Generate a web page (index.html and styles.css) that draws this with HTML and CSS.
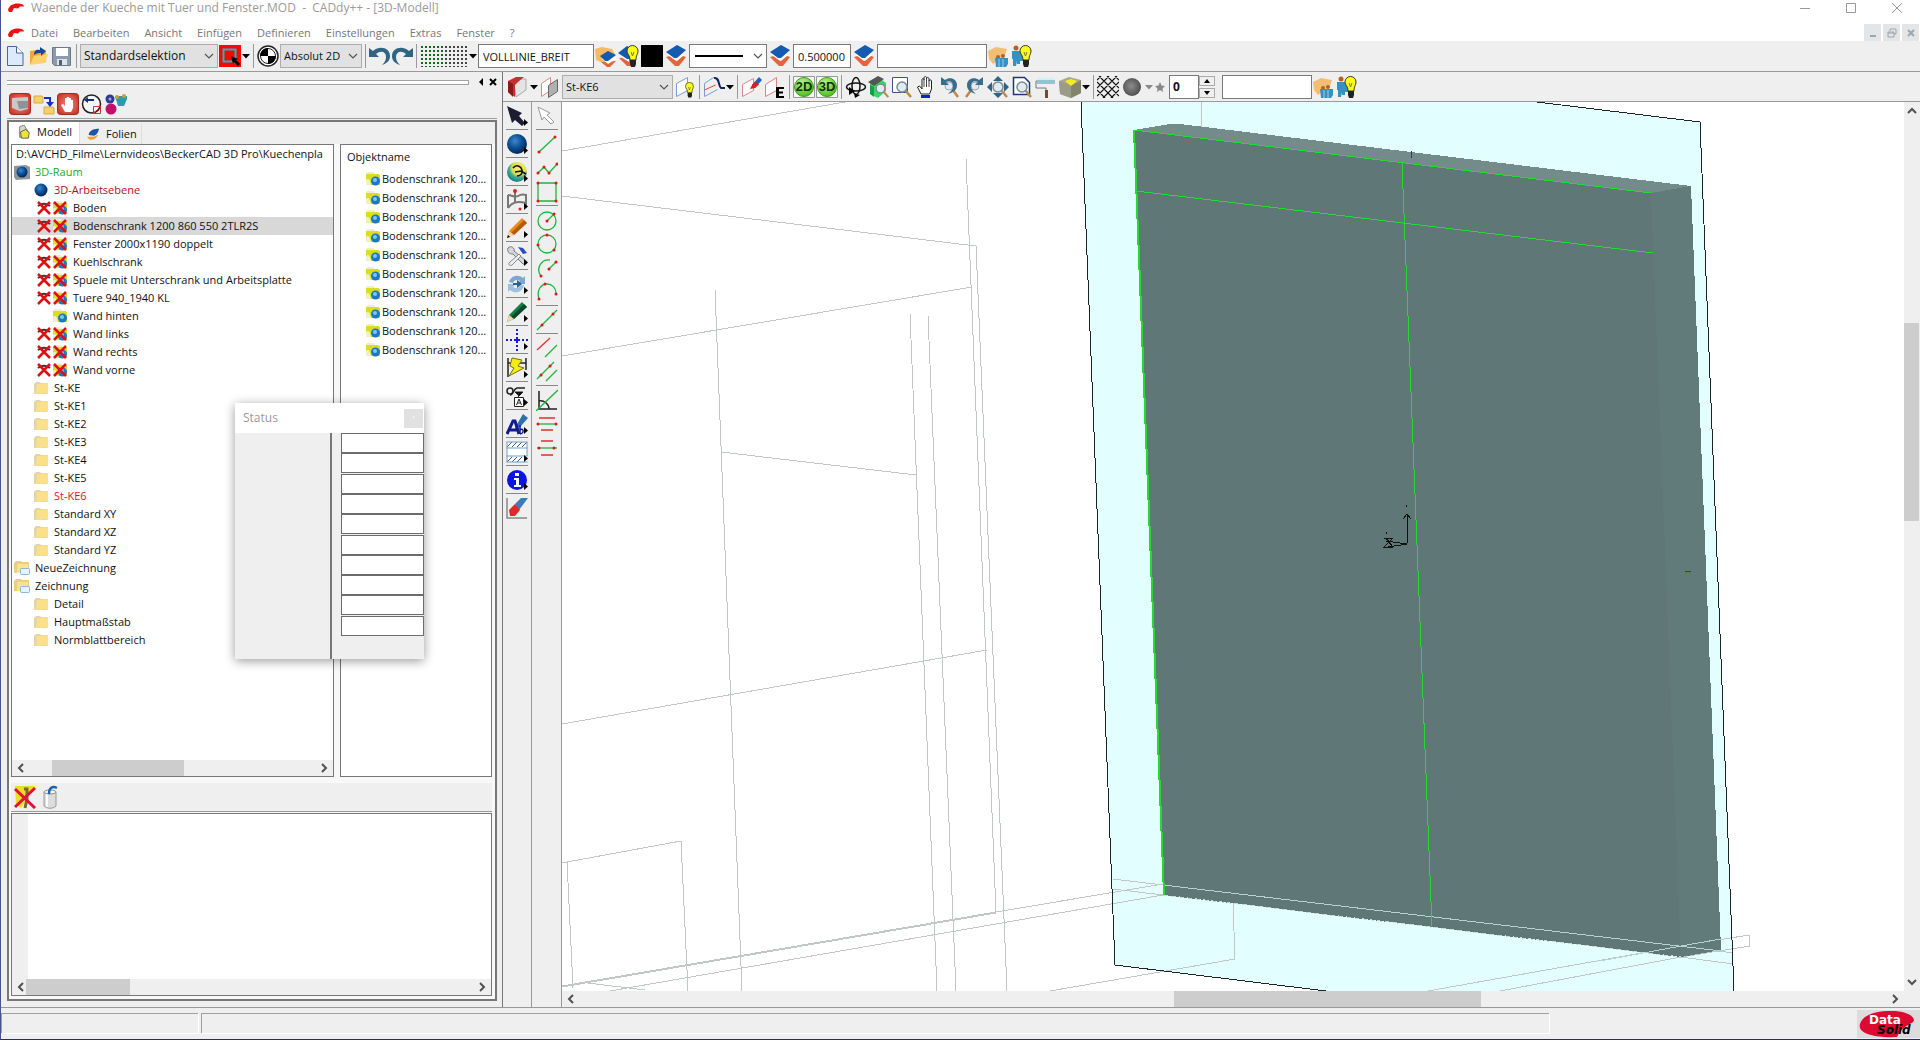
FILE: index.html
```html
<!DOCTYPE html>
<html lang="de">
<head>
<meta charset="utf-8">
<title>Waende der Kueche mit Tuer und Fenster.MOD - CADdy++ - [3D-Modell]</title>
<link rel="stylesheet" href="styles.css">
</head>
<body>
<svg class="defs" aria-hidden="true">
  <defs>
    <radialGradient id="g-ball" cx=".4" cy=".35" r=".7"><stop offset="0" stop-color="#3f8ac8"/><stop offset=".5" stop-color="#0c4f97"/><stop offset="1" stop-color="#04204a"/></radialGradient>
    <radialGradient id="g-lime" cx=".4" cy=".3" r=".7"><stop offset="0" stop-color="#b8f58a"/><stop offset="1" stop-color="#4fbf22"/></radialGradient>
    <radialGradient id="g-grey" cx=".45" cy=".45" r=".6"><stop offset="0" stop-color="#8c8c8c"/><stop offset="1" stop-color="#4a4a4a"/></radialGradient>
    <radialGradient id="g-marble" cx=".6" cy=".3" r=".8"><stop offset="0" stop-color="#fff36a"/><stop offset=".45" stop-color="#d8dc50"/><stop offset=".6" stop-color="#3fae98"/><stop offset="1" stop-color="#0b6a70"/></radialGradient>
    <radialGradient id="g-red" cx=".5" cy=".5" r=".7"><stop offset="0" stop-color="#f4897c"/><stop offset="1" stop-color="#c0281c"/></radialGradient>
  </defs>
  <symbol id="logo" viewBox="0 0 16 10"><path d="M0 7C1 2 6 0 11 0.5c3 .3 5 1.500 5 3L12 3.500 10 5.500 6 5 4 9 1 9z" fill="#f01010"/></symbol>
  <symbol id="new" viewBox="0 0 22 22"><path d="M2.500 1.500h9l6.500 6.500v12.500H2.500z" fill="#dcebfb" stroke="#4a6698"/><path d="M11.500 1.500V8H18" fill="#fff" stroke="#4a6698"/></symbol>
  <symbol id="open" viewBox="0 0 22 22"><path d="M2 19V6l7-1 2 2 7-1v11z" fill="#efa738"/><path d="M2 20l4-9 14-2-3 9z" fill="#fdd26c"/><path d="M6 10c0-5 3-6 6-5V2l6 4-5 5V8c-2 0-4 0-7 2z" fill="#15489a"/></symbol>
  <symbol id="save" viewBox="0 0 22 22"><path d="M1.500 2.500h18v18H3.500l-2-2z" fill="#8a9cae" stroke="#6c7a88"/><path d="M5 3h12v8H5z" fill="#fff"/><path d="M6 14h10v6H6z" fill="#dfe4e8"/><path d="M8 15h3v5H8z" fill="#54626f"/></symbol>
  <symbol id="sel" viewBox="0 0 22 22"><path d="M0 0h22v22H0z" fill="#fb0505"/><path d="M4.500 4.500h12v12h-12z" fill="none" stroke="#23b7b7" stroke-width="2"/><path d="M12 11l7 3-2 1 4 4-2 2-4-4-1 2z"/></symbol>
  <symbol id="cog" viewBox="0 0 22 22"><circle cx="11" cy="11" r="10" fill="#fff" stroke="#222" stroke-width="1.500"/><circle cx="11" cy="11" r="7.500" fill="#fff" stroke="#222"/><path d="M11 11V3a8 8 0 0 0-8 8zM11 11v8a8 8 0 0 0 8-8z"/></symbol>
  <symbol id="undo" viewBox="0 0 22 22"><path d="M0 3v9h10L7 9c5-4 10-2 10 3 0 3-1 5-4 8 6-2 8-5 8-9C21 3 11 0 4 6z" fill="#2f6485"/></symbol>
  <symbol id="dots" viewBox="0 0 48 22"><path d="M1 2h23M1 6h23M1 10h23M1 14h23M1 18h23M1 22h23" stroke="#146a14" stroke-width="2" stroke-dasharray="2 2"/><path d="M25 2h22M25 6h22M25 10h22M25 14h22M25 18h22M25 22h22" stroke="#444" stroke-width="2" stroke-dasharray="2 2"/></symbol>
  <symbol id="layers" viewBox="0 0 22 22"><path d="M1 12l9 9h4l7-9-3-1-6 5-7-5z" fill="#e8623c"/><path d="M3 10l8 6 8-6-1-2H4z" fill="#fff"/><path d="M1 7l11-7 9 5-9 8H9z" fill="#135ab0"/></symbol>
  <symbol id="flayers" viewBox="0 0 22 22"><path d="M0 4l7-2 10 2 3 5-12 9-7-3z" fill="#f6ba60"/><path d="M6 17l6 5h3l6-6z" fill="#e8623c"/><path d="M7 14l6 5 8-5v-2H7z" fill="#fff"/><path d="M5 11l8-5 8 4-8 6h-3z" fill="#135ab0"/></symbol>
  <symbol id="bulbpart" viewBox="0 0 22 22"><path d="M9 6a5.500 5.500 0 1 1 11 0c0 3-2 4-2 9h-6c0-5-3-6-3-9z" fill="#fbfb1c" stroke="#3c3c10"/><path d="M12 15h6v4l-1 3h-4l-1-3z" fill="#222"/><path d="M13 7l1.500 4L16 7" fill="none" stroke="#775"/></symbol>
  <symbol id="lbulb" viewBox="0 0 22 22"><path d="M1 13l8 8h4v-9z" fill="#e8623c"/><path d="M3 12l8 5v-6z" fill="#fff"/><path d="M0 8l9-7 4 2v11H9z" fill="#135ab0"/><use href="#bulbpart" width="22" height="22"/></symbol>
  <symbol id="pbulb" viewBox="0 0 22 22"><circle cx="5" cy="3" r="2.500" fill="#b5621a"/><path d="M1 6h11v10H9v3H6v-3l-1 5H2v-7H1z" fill="#3590c4"/><use href="#bulbpart" width="22" height="22"/></symbol>
  <symbol id="fpeople" viewBox="0 0 22 22"><path d="M0 6l8-4 11 2-2 6-12 9-4-5z" fill="#f4bd75"/><circle cx="10" cy="12" r="2" fill="#b5621a"/><circle cx="15" cy="11" r="2" fill="#b5621a"/><path d="M7 13h13v6l-2 3H8z" fill="#3590c4"/><path d="M11 14v8M15 14v8" stroke="#9bd0ea"/></symbol>
  <symbol id="wall" viewBox="0 0 22 22"><path d="M7 7l4-4h8v11l-10 7z" fill="#e4e4e4" stroke="#aaa"/><path d="M1 5l8-4h8l-6 5-3 3v12l-7-5z" fill="#c43030"/><path d="M1 5l5 3v13l-5-5z" fill="#8a1a1a"/></symbol>
  <symbol id="planes" viewBox="0 0 22 22"><path d="M2.500 7.500l9-6v13l-9 6z" fill="#fff" stroke="#d88"/><path d="M9.500 9.500l9-6v12l-9 6z" fill="#b0b0b0" stroke="#666"/></symbol>
  <symbol id="planebulb" viewBox="0 0 22 22"><path d="M2.500 7.500l11-6v13l-11 6z" fill="#fff" stroke="#7d9bd0"/><g transform="translate(5 6) scale(.72)"><use href="#bulbpart" width="22" height="22"/></g></symbol>
  <symbol id="curve" viewBox="0 0 22 22"><path d="M1.500 7.500l9-6M1.500 20.500l13-7M1.500 7.500v13" fill="none" stroke="#7d9bd0"/><path d="M1.500 14l11-5" stroke="#e04040"/><path d="M11 2c6-1 4 8 7 10h4" fill="none" stroke="#10235c" stroke-width="2"/></symbol>
  <symbol id="planepen" viewBox="0 0 22 22"><path d="M1.500 8.500l11-6v12l-11 6z" fill="#fff" stroke="#d88"/><path d="M11 9l7-8 3 3-7 8z" fill="#1d62c0"/><path d="M11 9l3-3.500 4 3-4 3.500-5 1z" fill="#d82020"/></symbol>
  <symbol id="planee" viewBox="0 0 22 22"><path d="M1.500 8.500l11-7v13l-11 6z" fill="#fff" stroke="#e48080"/><path d="M12 11h8v2h-5v2.500h4v2h-4V20h5v2h-8z"/></symbol>
  <symbol id="disc" viewBox="0 0 22 22"><path d="M.5.5h21v21H.5z" fill="#f8f8f8" stroke="#999"/><circle cx="11" cy="11" r="9.500" fill="url(#g-lime)" stroke="#3d9a1e"/></symbol>
  <symbol id="rotate" viewBox="0 0 22 22"><ellipse cx="11" cy="10" rx="4" ry="8.500" fill="none" stroke="#111" stroke-width="1.500"/><ellipse cx="11" cy="11" rx="9.500" ry="4" fill="none" stroke="#111" stroke-width="1.500"/><path d="M4 11l6 4-6 4zM9 17l6 2-5 3z"/></symbol>
  <symbol id="mag" viewBox="0 0 22 22"><path d="M14 14l6 7" stroke="#b98a4a" stroke-width="2.500"/><circle cx="11" cy="11" r="5" fill="#dfeaf2" stroke="#7a8a96" stroke-width="1.500"/></symbol>
  <symbol id="house" viewBox="0 0 22 22"><path d="M2 7l8-6 8 6v8l-8 7-8-4z" fill="#35d866"/><path d="M0 6l10-6 6 3-10 7z" fill="#555"/><path d="M2 9l4 2v10l-4-3z" fill="#1f9a44"/><use href="#mag" x="3" y="3" width="19" height="19"/></symbol>
  <symbol id="zoomwin" viewBox="0 0 22 22"><path d="M1.500 1.500h15v15h-15z" fill="#fff" stroke="#44509c"/><use href="#mag" width="22" height="22"/></symbol>
  <symbol id="hand" viewBox="0 0 22 22"><path d="M6 18L2.500 11l2-1 2.500 3V4c0-2 2-2 2 0V2c0-2 2.500-2 2.500 0v1c0-2 2.500-2 2.500 0v2c0-1.500 2.500-1.500 2.500 0v8l-2 5z" fill="#fff" stroke="#222"/><path d="M9 4v7M11.500 3v8M14 5v6" stroke="#444"/><path d="M6 19h9v3H6z" fill="#1020d0"/></symbol>
  <symbol id="zundo" viewBox="0 0 22 22"><path d="M13 13l6 8" stroke="#b98a4a" stroke-width="2.500"/><circle cx="10" cy="10" r="4" fill="#dfeaf2" stroke="#9aa"/><path d="M2 1v8h8L7 6c4-2 7 0 7 4s-2 5-5 8c6-2 9-4 9-9 0-6-7-9-12-5z" fill="#3a6c8c"/></symbol>
  <symbol id="pan" viewBox="0 0 22 22"><path d="M11 0l5 5H6zM11 22l5-5H6zM0 11l5-5v10zM22 11l-5-5v10z" fill="#2f6485"/><use href="#mag" width="22" height="22"/></symbol>
  <symbol id="page" viewBox="0 0 22 22"><path d="M2.500 1.500h11l5 5v12h-16z" fill="#fff" stroke="#23308c" stroke-width="1.500"/><use href="#mag" width="22" height="22"/></symbol>
  <symbol id="roller" viewBox="0 0 22 22"><path d="M2 2h18v6H2z" fill="#8fc6d2"/><path d="M2 2h18v2H2z" fill="#d5eef3"/><path d="M2 5H1v7h10v3" fill="none" stroke="#777"/><path d="M10 14h3v8h-3z" fill="#7a4a2c"/></symbol>
  <symbol id="cube" viewBox="0 0 22 22"><path d="M0 5l10-4 12 3v13l-10 5L1 18z" fill="#a8a890"/><path d="M0 5l12 4v13L1 18z" fill="#9a9c88"/><path d="M6 5l6-2 6 2-6 5z" fill="#f4ee1c"/><path d="M12 10v12l10-5V4z" fill="#84846c"/></symbol>
  <symbol id="hatch" viewBox="0 0 22 22"><path d="M0 4l4-4M0 12L12 0M0 20L20 0M6 22L22 6M14 22l8-8M18 0l4 4M10 0l12 12M2 0l20 20M0 6l16 16M0 14l8 8" stroke="#111" stroke-width="1.200"/></symbol>
  <symbol id="greyball" viewBox="0 0 22 22"><circle cx="11" cy="11" r="9" fill="url(#g-grey)"/></symbol>
  <symbol id="star" viewBox="0 0 12 12"><path d="M6 1l1.500 3.500L11 5 8.500 7.500 9 11 6 9l-3 2 .5-3.500L1 5l3.500-.5z" fill="#888"/></symbol>
  <symbol id="redbtn" viewBox="0 0 22 22"><rect x=".5" y=".5" width="21" height="21" rx="3" fill="url(#g-red)" stroke="#a02a20"/></symbol>
  <symbol id="p1" viewBox="0 0 22 22"><use href="#redbtn" width="22" height="22"/><path d="M3 5l16-1v12l-8 2-8-3z" fill="#c9c9c9"/><path d="M8 8h11v7l-9 1z" fill="#8e9496"/></symbol>
  <symbol id="p2" viewBox="0 0 22 22"><path d="M1 3h8l1 1v6H1zM11 14h9l1 1v6H11z" fill="#f5d070" stroke="#d8aa48"/><path d="M11 5h6v5" fill="none" stroke="#1030c8" stroke-width="2"/><path d="M13 9h8l-4 5z" fill="#1030c8"/></symbol>
  <symbol id="p3" viewBox="0 0 22 22"><use href="#redbtn" width="22" height="22"/><path d="M8 19l-4-7 2-1 2 2V5h2v5V4h2v6-5h2v6-4h2v8l-2 4z" fill="#fff"/></symbol>
  <symbol id="p4" viewBox="0 0 22 22"><circle cx="10.500" cy="11" r="9" fill="#f6f6f6" stroke="#222" stroke-width="1.500"/><path d="M5 7h8" stroke="#10307c" stroke-width="2"/><path d="M3 7l4-3v6z" fill="#10307c"/><path d="M12.500 13.500h7v7h-7zM12.500 20.500l4-4" fill="none" stroke="#d03030"/></symbol>
  <symbol id="p5" viewBox="0 0 22 22"><circle cx="5" cy="6" r="4.500" fill="#2c3c9c"/><circle cx="6" cy="16" r="5.500" fill="#c0106c"/><circle cx="5" cy="6" r="1.500" fill="#aab"/><path d="M10 3h12v3l-3 7h-6z" fill="#2a9cb0"/><circle cx="12" cy="4" r="2" fill="#c8a040"/><circle cx="19" cy="3" r="2" fill="#c8a040"/></symbol>
  <symbol id="t1" viewBox="0 0 16 16"><path d="M3 2l5-2 5 8-2 5-8 1z" fill="#d8d8c0" stroke="#777"/><path d="M4 8l6-3 4 4-1 6H5z" fill="#ece43c" stroke="#554"/></symbol>
  <symbol id="t2" viewBox="0 0 16 16"><path d="M1 11c3 5 8 5 13-2-3 0-4 3-7 2z" fill="#f0a030"/><path d="M3 9c1-6 7-7 12-7-1 3-2 7-6 8z" fill="#1b56a8"/></symbol>
  <symbol id="room" viewBox="0 0 16 16"><path d="M0 2l12-1 4 2v12l-14 1-2-3z" fill="#8f9699"/><circle cx="8" cy="8" r="5.500" fill="url(#g-ball)"/></symbol>
  <symbol id="ball" viewBox="0 0 16 16"><circle cx="8" cy="8" r="6.500" fill="url(#g-ball)"/></symbol>
  <symbol id="part" viewBox="0 0 16 16"><path d="M1 3h12l2 1v10H1z" fill="#dcdc20"/><path d="M2 1h7l1 2H1z" fill="#eeeec8"/><path d="M1 9c2-2 4-1 5 5H1z" fill="#f0f0c0"/><circle cx="10.500" cy="10" r="4.500" fill="#1a78c8"/><circle cx="10" cy="9" r="2" fill="#7cc8f4"/></symbol>
  <symbol id="x1" viewBox="0 0 16 16"><path d="M2 6c3-3 9-3 12 0" fill="none" stroke="#333" stroke-width="2"/><path d="M2 2l12 12M14 2L2 14" stroke="#e01010" stroke-width="2.500"/></symbol>
  <symbol id="x2" viewBox="0 0 16 16"><use href="#part" width="16" height="16"/><path d="M2 2l12 12M14 2L2 14" stroke="#e01010" stroke-width="2.500"/></symbol>
  <symbol id="folder" viewBox="0 0 16 16"><path d="M1 4l2-2h4l1 1h7v10l-1 1H1z" fill="#e4d5a4"/><path d="M4 4l11-1v10l-12 1z" fill="#fbe08a"/></symbol>
  <symbol id="dfolder" viewBox="0 0 16 16"><path d="M0 3l2-2h5l1 1h7v11H0z" fill="#e9cf83"/><path d="M3 4h11v9H3z" fill="#fbe28c"/><rect x="6.500" y="8.500" width="9" height="6" rx="1" fill="#e8f4fc" stroke="#8ab6d8"/></symbol>
  <symbol id="del" viewBox="0 0 24 24"><path d="M2 1h20l-6 10-8 12-5-4z" fill="#e8e020"/><path d="M11 4h3v10l-2 9" fill="none" stroke="#776a30" stroke-width="3"/><path d="M2 4l20 19M22 3L2 22" stroke="#e4103c" stroke-width="3"/></symbol>
  <symbol id="bin" viewBox="0 0 24 24"><path d="M4 7h12v14c-3 3-9 3-12 0z" fill="#dcdcdc" stroke="#999"/><path d="M7 9v13" stroke="#fff" stroke-width="2"/><ellipse cx="10" cy="7" rx="6" ry="2" fill="#f6f6f6" stroke="#888"/><path d="M9 9c0-7 4-8 8-6" fill="none" stroke="#1d62ac" stroke-width="2.500"/></symbol>
  <symbol id="more" viewBox="0 0 22 22"><path d="M18 14l4 3.500-4 3.500z"/></symbol>
  <symbol id="v1" viewBox="0 0 22 22"><path d="M1 1l15 7-3 3 6 7-3 3-7-6-3 3z" fill="#1c1c34"/></symbol>
  <symbol id="v2" viewBox="0 0 22 22"><circle cx="11" cy="11" r="10" fill="url(#g-ball)"/></symbol>
  <symbol id="v3" viewBox="0 0 22 22"><circle cx="11" cy="11" r="10" fill="url(#g-marble)"/><path d="M7 7c3-4 8-2 9 2s-2 6-5 6" fill="none" stroke="#111" stroke-width="1.500"/><path d="M9 11l6-1 5 3" fill="none" stroke="#111" stroke-width="1.500"/></symbol>
  <symbol id="v4" viewBox="0 0 22 22"><path d="M2 6v13M2 6c4 0 7 3 10 1s5-2 8-1v11M2 19c4-6 9-7 18-5M9 3v10" fill="none" stroke="#777" stroke-width="2"/><circle cx="9" cy="2" r="2" fill="#e02020"/><circle cx="14" cy="20" r="1.500" fill="#e02020"/></symbol>
  <symbol id="v5" viewBox="0 0 22 22"><path d="M1 21l2-7L16 1l5 5L8 18z" fill="#ee8a1c"/><path d="M5 16L18 3l3 3L8 18z" fill="#b85a0c"/><path d="M1 21l2-7 5 4z" fill="#f3d8a8"/><path d="M1 21l1-3 2 2z"/></symbol>
  <symbol id="v6" viewBox="0 0 22 22"><path d="M2 3c3-3 7 0 6 3l11 9c3 1 1 5-2 4L7 9C3 9 1 7 2 3z" fill="#d4d8de" stroke="#777"/><path d="M12 2l5 1 4 5-4 1z" fill="#2d4cc0"/><path d="M3 18l10-9 2 2-9 9c-2 1-4 0-3-2z" fill="#eee" stroke="#888"/></symbol>
  <symbol id="v7" viewBox="0 0 22 22"><path d="M3 9c2-7 10-8 14-4l2-2v8h-8l3-3c-3-2-6-1-7 2z" fill="#7ca6d4"/><path d="M18 12c-2 8-9 9-14 5l-2 2v-8h8l-3 3c3 2 6 1 8-2z" fill="#9dbfe0"/><path d="M7 10h4V7l5 4-5 4v-3H7z" fill="#2c5e98"/></symbol>
  <symbol id="v8" viewBox="0 0 22 22"><path d="M1 21l2-7L16 1l5 5L8 18z" fill="#178048"/><path d="M5 16L18 3l3 3L8 18z" fill="#0c4c2a"/><path d="M1 21l2-7 5 4z" fill="#f3d8a8"/></symbol>
  <symbol id="v9" viewBox="0 0 22 22"><path d="M11 0v22M0 11h22" stroke="#1818e0" stroke-width="2" stroke-dasharray="2 2"/><path d="M8 11h6M11 8v6" stroke="#1818e0" stroke-width="2"/></symbol>
  <symbol id="v10" viewBox="0 0 22 22"><path d="M2 1v19M20 1v12M2 6h18" stroke="#222" stroke-width="1.500"/><path d="M6 1l10 2-4 6 6 2L3 19l5-8-4-2z" fill="#f4ec14" stroke="#77700c"/></symbol>
  <symbol id="v11" viewBox="0 0 22 22"><circle cx="4" cy="6" r="3" fill="none" stroke="#222" stroke-width="1.500"/><path d="M4 10c4 0 3-6 7-7h8" fill="none" stroke="#222" stroke-width="1.500"/><path d="M9 7h8l-4 4zM12.500 8v4" stroke="#222"/><path d="M8.500 12.500h9v9h-9z" fill="#fff" stroke="#222"/><path d="M10.500 20l2.500-6 2.500 6M11.500 18h3" fill="none" stroke="#222"/></symbol>
  <symbol id="v12" viewBox="0 0 22 22"><path d="M10 13l7-12 5 4-8 9-5 2z" fill="#2f6fae"/><path d="M1 21L7 8h2l4 13M4 17h7" fill="none" stroke="#101c8c" stroke-width="3"/><path d="M14 12v9M14 17c3-3 5 3 0 4" fill="none" stroke="#101c8c" stroke-width="1.500"/></symbol>
  <symbol id="v13" viewBox="0 0 22 22"><path d="M1 1h20v20H1z" fill="#fff"/><path d="M1 6l5-5M6 6l5-5M11 6l5-5M16 6l5-5M1 21l5-5M6 21l5-5M11 21l5-5" stroke="#3c5c84"/><path d="M.5 1h21M.5 7h21M.5 15h21M.5 21h21M1 1v20M21 1v14" stroke="#6f9fcc"/></symbol>
  <symbol id="v14" viewBox="0 0 22 22"><circle cx="11" cy="11" r="10" fill="#0c14e0"/><path d="M9 4h4v3H9zM8 9h5v7h2v2H8v-2h2v-5H8z" fill="#fff"/></symbol>
  <symbol id="v15" viewBox="0 0 22 22"><path d="M1 1v20h20" fill="none" stroke="#888" stroke-width="1.500"/><path d="M9 7l6-6h7l-9 12z" fill="#3a7cb8"/><path d="M3 13l6-6 5 6-5 6H4z" fill="#e02828"/></symbol>
  <symbol id="w1" viewBox="0 0 22 22"><path d="M2 2l12 6-3 2 7 7-3 2-7-7-2 3z" fill="#fff" stroke="#999"/></symbol>
  <symbol id="w2" viewBox="0 0 22 22"><path class="ln" d="M3 19L19 4"/><path class="pt" d="M3 19h0M19 4h0"/></symbol>
  <symbol id="w3" viewBox="0 0 22 22"><path class="ln" d="M2 16l6-6 5 6 8-9"/><path class="pt" d="M2 16h0M8 10h0M13 16h0M21 7h0"/></symbol>
  <symbol id="w4" viewBox="0 0 22 22"><path class="ln" d="M2 2h18v18H2z"/><path class="pt" d="M2 2h0M20 2h0M20 20h0M2 20h0"/></symbol>
  <symbol id="w5" viewBox="0 0 22 22"><circle class="ln" cx="11" cy="12" r="9"/><path class="ln" d="M11 12l7-7"/><path class="pt" d="M11 12h0M18 5h0"/></symbol>
  <symbol id="w6" viewBox="0 0 22 22"><circle class="ln" cx="11" cy="11" r="9"/><path class="pt" d="M11 2h0M2 12h0M18 17h0"/></symbol>
  <symbol id="w7" viewBox="0 0 22 22"><path class="ln" d="M5 19C-1 11 6 2 14 3M13 12l7-7"/><path class="pt" d="M5 19h0M13 12h0M20 5h0"/></symbol>
  <symbol id="w8" viewBox="0 0 22 22"><path class="ln" d="M3 18C0 8 6 3 11 3s9 4 9 9"/><path class="pt" d="M3 18h0M9 3h0M20 13h0"/></symbol>
  <symbol id="w9" viewBox="0 0 22 22"><path class="ln" d="M1 21L21 1"/><path class="pt" d="M6 16h0M17 5h0"/></symbol>
  <symbol id="w10" viewBox="0 0 22 22"><path class="rd" d="M1 13L14 1"/><path class="ln" d="M9 20L21 8"/></symbol>
  <symbol id="w11" viewBox="0 0 22 22"><path class="ln" d="M1 18L18 1M10 20L21 9"/><path class="pt" d="M5 14h0M14 5h0"/></symbol>
  <symbol id="w12" viewBox="0 0 22 22"><path d="M3 2v18h18M3 12c5-1 10 3 10 8" fill="none" stroke="#222" stroke-width="1.500"/><path class="ln" d="M0 22L22 1"/></symbol>
  <symbol id="w13" viewBox="0 0 22 22"><path class="rd" d="M3 5h16M5 17h12"/><path class="ln" d="M1 11h20"/><path class="pt" d="M2 11h0M20 11h0"/></symbol>
  <symbol id="w14" viewBox="0 0 22 22"><path class="rd" d="M5 4h12M5 18h12"/><path class="ln" d="M1 11h20"/><path class="pt" d="M3 11h0M18 11h0"/></symbol>
  <symbol id="down" viewBox="0 0 8 22"><path d="M0 9h8l-4 4.500z"/></symbol>
  <symbol id="chev" viewBox="0 0 10 10"><path d="M1 3l4 4 4-4" fill="none" stroke="#555" stroke-width="1.200"/></symbol>
  <symbol id="sb" viewBox="0 0 10 10"><path d="M7 1L3 5l4 4" fill="none" stroke="#505050" stroke-width="2"/></symbol>
</svg>

<header class="title">
  <svg class="logo"><use href="#logo"/></svg>
  <h1>Waende der Kueche mit Tuer und Fenster.MOD&nbsp; -&nbsp; CADdy++ - [3D-Modell]</h1>
  <div class="winbtns">
    <button aria-label="Minimieren"><svg viewBox="0 0 12 12"><path d="M1 6.500h10"/></svg></button>
    <button aria-label="Maximieren"><svg viewBox="0 0 12 12"><path d="M1.500 1.500h9v9h-9z"/></svg></button>
    <button aria-label="Schließen"><svg viewBox="0 0 12 12"><path d="M1 1l10 10M11 1L1 11"/></svg></button>
  </div>
</header>
<nav class="menu">
  <svg class="logo"><use href="#logo"/></svg>
  <button>Datei</button><button>Bearbeiten</button><button>Ansicht</button><button>Einfügen</button><button>Definieren</button><button>Einstellungen</button><button>Extras</button><button>Fenster</button><button>?</button>
  <div class="mdi">
    <button aria-label="Fenster minimieren"><svg viewBox="0 0 12 12"><path d="M3 9h6"/></svg></button>
    <button aria-label="Fenster wiederherstellen"><svg viewBox="0 0 12 12"><path class="thin" d="M4 4V2h6v5H8M2 5h6v5H2zM2 6h6"/></svg></button>
    <button aria-label="Fenster schließen"><svg viewBox="0 0 12 12"><path d="M3 3l6 6M9 3L3 9"/></svg></button>
  </div>
</nav>

<div class="bar">
  <button class="ib" aria-label="Neu"><svg><use href="#new"/></svg></button>
  <button class="ib" aria-label="Öffnen"><svg><use href="#open"/></svg></button>
  <button class="ib" aria-label="Speichern"><svg><use href="#save"/></svg></button>
  <i class="sep"></i>
  <span class="sel w138"><select aria-label="Selektion"><option>Standardselektion</option></select><svg><use href="#chev"/></svg></span>
  <button class="ib" aria-label="Selektieren"><svg><use href="#sel"/></svg></button>
  <button class="dd" aria-label="Mehr"><svg><use href="#down"/></svg></button>
  <i class="sep"></i>
  <button class="ib" aria-label="Koordinaten"><svg><use href="#cog"/></svg></button>
  <span class="sel w82"><select aria-label="Koordinatenmodus"><option>Absolut 2D</option></select><svg><use href="#chev"/></svg></span>
  <i class="sep"></i>
  <span class="pair"><button class="ib" aria-label="Rückgängig"><svg><use href="#undo"/></svg></button><button class="ib flip" aria-label="Wiederholen"><svg><use href="#undo"/></svg></button></span>
  <i class="sep"></i>
  <button class="ib grid" aria-label="Raster"><svg><use href="#dots"/></svg></button>
  <button class="dd" aria-label="Rasteroptionen"><svg><use href="#down"/></svg></button>
  <input class="field w116" aria-label="Linientyp" value="VOLLLINIE_BREIT">
  <button class="ib" aria-label="Folien öffnen"><svg><use href="#flayers"/></svg></button>
  <button class="ib" aria-label="Folien sichtbar"><svg><use href="#lbulb"/></svg></button>
  <button class="ib black" aria-label="Farbe"></button>
  <button class="ib wide" aria-label="Farbe nach Folie"><svg><use href="#layers"/></svg></button>
  <span class="sel white w78"><select aria-label="Linienart"><option label=" "></option></select><svg class="stroke" viewBox="0 0 48 4"><path d="M0 2h48" stroke="#000" stroke-width="2"/></svg><svg><use href="#chev"/></svg></span>
  <button class="ib wide" aria-label="Linienart nach Folie"><svg><use href="#layers"/></svg></button>
  <input class="field w58" aria-label="Linienbreite" value="0.500000">
  <button class="ib wide" aria-label="Breite nach Folie"><svg><use href="#layers"/></svg></button>
  <input class="field w110" aria-label="Gruppe">
  <button class="ib" aria-label="Gruppen öffnen"><svg><use href="#fpeople"/></svg></button>
  <button class="ib" aria-label="Gruppen sichtbar"><svg><use href="#pbulb"/></svg></button>
</div>

<div class="work">
  <aside class="dock">
    <div class="grip"><i></i><button aria-label="Andocken"><svg viewBox="0 0 8 8"><path d="M6 0v8L2 4z"/></svg></button><button aria-label="Schließen"><svg viewBox="0 0 8 8"><path d="M1 1l6 6M7 1L1 7" stroke="#000" stroke-width="2"/></svg></button></div>
    <div class="dockbar">
      <button class="ib" aria-label="Ansicht"><svg><use href="#p1"/></svg></button>
      <button class="ib" aria-label="Struktur"><svg><use href="#p2"/></svg></button>
      <button class="ib" aria-label="Greifen"><svg><use href="#p3"/></svg></button>
      <button class="ib" aria-label="Messen"><svg><use href="#p4"/></svg></button>
      <button class="ib" aria-label="Gruppen"><svg><use href="#p5"/></svg></button>
    </div>
    <section class="book">
      <div class="tabs"><button class="on"><svg><use href="#t1"/></svg>Modell</button><button><svg><use href="#t2"/></svg>Folien</button></div>
      <div class="panes">
        <div class="pane tree">
          <ul>
            <li class="path">D:\AVCHD_Filme\Lernvideos\BeckerCAD 3D Pro\Kuechenpla</li>
            <li class="l1 green"><svg><use href="#room"/></svg>3D-Raum</li>
            <li class="l2 dark"><svg><use href="#ball"/></svg>3D-Arbeitsebene</li>
            <li class="l3"><svg><use href="#x1"/></svg><svg><use href="#x2"/></svg>Boden</li>
            <li class="l3 cur"><svg><use href="#x1"/></svg><svg><use href="#x2"/></svg>Bodenschrank 1200 860 550 2TLR2S</li>
            <li class="l3"><svg><use href="#x1"/></svg><svg><use href="#x2"/></svg>Fenster 2000x1190 doppelt</li>
            <li class="l3"><svg><use href="#x1"/></svg><svg><use href="#x2"/></svg>Kuehlschrank</li>
            <li class="l3"><svg><use href="#x1"/></svg><svg><use href="#x2"/></svg>Spuele mit Unterschrank und Arbeitsplatte</li>
            <li class="l3"><svg><use href="#x1"/></svg><svg><use href="#x2"/></svg>Tuere 940_1940 KL</li>
            <li class="l3"><svg></svg><svg><use href="#part"/></svg>Wand hinten</li>
            <li class="l3"><svg><use href="#x1"/></svg><svg><use href="#x2"/></svg>Wand links</li>
            <li class="l3"><svg><use href="#x1"/></svg><svg><use href="#x2"/></svg>Wand rechts</li>
            <li class="l3"><svg><use href="#x1"/></svg><svg><use href="#x2"/></svg>Wand vorne</li>
            <li class="l2"><svg><use href="#folder"/></svg>St-KE</li>
            <li class="l2"><svg><use href="#folder"/></svg>St-KE1</li>
            <li class="l2"><svg><use href="#folder"/></svg>St-KE2</li>
            <li class="l2"><svg><use href="#folder"/></svg>St-KE3</li>
            <li class="l2"><svg><use href="#folder"/></svg>St-KE4</li>
            <li class="l2"><svg><use href="#folder"/></svg>St-KE5</li>
            <li class="l2 red"><svg><use href="#folder"/></svg>St-KE6</li>
            <li class="l2"><svg><use href="#folder"/></svg>Standard XY</li>
            <li class="l2"><svg><use href="#folder"/></svg>Standard XZ</li>
            <li class="l2"><svg><use href="#folder"/></svg>Standard YZ</li>
            <li class="l1"><svg><use href="#dfolder"/></svg>NeueZeichnung</li>
            <li class="l1"><svg><use href="#dfolder"/></svg>Zeichnung</li>
            <li class="l2"><svg><use href="#folder"/></svg>Detail</li>
            <li class="l2"><svg><use href="#folder"/></svg>Hauptmaßstab</li>
            <li class="l2"><svg><use href="#folder"/></svg>Normblattbereich</li>
          </ul>
          <div class="sbar"><svg><use href="#sb"/></svg><div class="track"><i class="thumb t-tree"></i></div><svg class="r"><use href="#sb"/></svg></div>
        </div>
        <div class="pane objs">
          <h2>Objektname</h2>
          <ul>
            <li><svg><use href="#part"/></svg>Bodenschrank 120...</li>
            <li><svg><use href="#part"/></svg>Bodenschrank 120...</li>
            <li><svg><use href="#part"/></svg>Bodenschrank 120...</li>
            <li><svg><use href="#part"/></svg>Bodenschrank 120...</li>
            <li><svg><use href="#part"/></svg>Bodenschrank 120...</li>
            <li><svg><use href="#part"/></svg>Bodenschrank 120...</li>
            <li><svg><use href="#part"/></svg>Bodenschrank 120...</li>
            <li><svg><use href="#part"/></svg>Bodenschrank 120...</li>
            <li><svg><use href="#part"/></svg>Bodenschrank 120...</li>
            <li><svg><use href="#part"/></svg>Bodenschrank 120...</li>
          </ul>
        </div>
      </div>
      <div class="delbar"><button aria-label="Löschen"><svg><use href="#del"/></svg></button><button aria-label="Papierkorb"><svg><use href="#bin"/></svg></button></div>
      <div class="pane log"><div class="gutter"></div>
        <div class="sbar"><svg><use href="#sb"/></svg><div class="track"><i class="thumb t-log"></i></div><svg class="r"><use href="#sb"/></svg></div>
      </div>
    </section>
  </aside>

  <main class="main">
    <div class="bar bar2">
      <button class="ib" aria-label="Wand"><svg><use href="#wall"/></svg></button>
      <button class="dd" aria-label="Wandoptionen"><svg><use href="#down"/></svg></button>
      <button class="ib" aria-label="Ebenen"><svg><use href="#planes"/></svg></button>
      <span class="sel w111"><select aria-label="Arbeitsebene"><option>St-KE6</option></select><svg><use href="#chev"/></svg></span>
      <button class="ib" aria-label="Ebene sichtbar"><svg><use href="#planebulb"/></svg></button>
      <i class="sep"></i>
      <button class="ib" aria-label="Kurve"><svg><use href="#curve"/></svg></button>
      <button class="dd" aria-label="Kurvenoptionen"><svg><use href="#down"/></svg></button>
      <i class="sep"></i>
      <button class="ib" aria-label="Ebene bearbeiten"><svg><use href="#planepen"/></svg></button>
      <button class="ib" aria-label="Ebene E"><svg><use href="#planee"/></svg></button>
      <i class="sep"></i>
      <button class="ib disc"><svg><use href="#disc"/></svg><b>2D</b></button>
      <button class="ib disc"><svg><use href="#disc"/></svg><b>3D</b></button>
      <i class="sep"></i>
      <button class="ib" aria-label="Drehen"><svg><use href="#rotate"/></svg></button>
      <button class="ib" aria-label="Modellansicht"><svg><use href="#house"/></svg></button>
      <button class="ib" aria-label="Zoom Fenster"><svg><use href="#zoomwin"/></svg></button>
      <button class="ib mid" aria-label="Verschieben"><svg><use href="#hand"/></svg></button>
      <button class="ib mid" aria-label="Zoom zurück"><svg><use href="#zundo"/></svg></button>
      <button class="ib mid flip" aria-label="Zoom vor"><svg><use href="#zundo"/></svg></button>
      <button class="ib mid" aria-label="Alles zeigen"><svg><use href="#pan"/></svg></button>
      <button class="ib mid" aria-label="Seite zeigen"><svg><use href="#page"/></svg></button>
      <button class="ib mid" aria-label="Neu zeichnen"><svg><use href="#roller"/></svg></button>
      <button class="ib mid" aria-label="Darstellung"><svg><use href="#cube"/></svg></button>
      <button class="dd" aria-label="Darstellungsoptionen"><svg><use href="#down"/></svg></button>
      <i class="sep"></i>
      <button class="ib" aria-label="Schraffur"><svg><use href="#hatch"/></svg></button>
      <button class="ib wide" aria-label="Material"><svg><use href="#greyball"/></svg></button>
      <button class="dd off" aria-label="Materialoptionen"><svg><use href="#down"/></svg></button>
      <svg class="star"><use href="#star"/></svg>
      <span class="spin"><input class="field" aria-label="Nummer" value="0"><span><button aria-label="Mehr"><svg viewBox="0 0 6 4"><path d="M0 4l3-4 3 4z"/></svg></button><button aria-label="Weniger"><svg viewBox="0 0 6 4"><path d="M0 0l3 4 3-4z"/></svg></button></span></span>
      <input class="field w90" aria-label="Filter">
      <button class="ib" aria-label="Gruppen"><svg><use href="#fpeople"/></svg></button>
      <button class="ib" aria-label="Gruppen zeigen"><svg><use href="#pbulb"/></svg></button>
    </div>
    <div class="stage">
      <div class="tools one">
        <button class="ib" aria-label="Auswahl"><svg><use href="#v1"/><use href="#more"/></svg></button><hr>
        <button class="ib" aria-label="Kugel"><svg><use href="#v2"/><use href="#more"/></svg></button><hr>
        <button class="ib" aria-label="Boolesch"><svg><use href="#v3"/><use href="#more"/></svg></button><hr>
        <button class="ib" aria-label="Fläche"><svg><use href="#v4"/><use href="#more"/></svg></button><hr>
        <button class="ib" aria-label="Zeichnen"><svg><use href="#v5"/><use href="#more"/></svg></button><hr>
        <button class="ib" aria-label="Werkzeuge"><svg><use href="#v6"/><use href="#more"/></svg></button><hr>
        <button class="ib" aria-label="Transformieren"><svg><use href="#v7"/><use href="#more"/></svg></button><hr>
        <button class="ib" aria-label="Stift"><svg><use href="#v8"/><use href="#more"/></svg></button><hr>
        <button class="ib" aria-label="Punkt"><svg><use href="#v9"/><use href="#more"/></svg></button><hr>
        <button class="ib" aria-label="Bemaßung"><svg><use href="#v10"/><use href="#more"/></svg></button><hr>
        <button class="ib" aria-label="Symbole"><svg><use href="#v11"/><use href="#more"/></svg></button><hr>
        <button class="ib" aria-label="Text"><svg><use href="#v12"/><use href="#more"/></svg></button><hr>
        <button class="ib" aria-label="Schraffieren"><svg><use href="#v13"/><use href="#more"/></svg></button><hr>
        <button class="ib" aria-label="Info"><svg><use href="#v14"/><use href="#more"/></svg></button><hr>
        <button class="ib" aria-label="Radieren"><svg><use href="#v15"/></svg></button>
      </div>
      <div class="tools two">
        <button class="ib" aria-label="Zeiger"><svg><use href="#w1"/></svg></button><hr>
        <button class="ib" aria-label="Linie"><svg><use href="#w2"/></svg></button>
        <button class="ib" aria-label="Polylinie"><svg><use href="#w3"/></svg></button>
        <button class="ib" aria-label="Rechteck"><svg><use href="#w4"/></svg></button><hr>
        <button class="ib" aria-label="Kreis"><svg><use href="#w5"/></svg></button>
        <button class="ib" aria-label="Kreis über drei Punkte"><svg><use href="#w6"/></svg></button>
        <button class="ib" aria-label="Bogen"><svg><use href="#w7"/></svg></button>
        <button class="ib" aria-label="Bogen über drei Punkte"><svg><use href="#w8"/></svg></button><hr>
        <button class="ib" aria-label="Hilfslinie"><svg><use href="#w9"/></svg></button><hr>
        <button class="ib" aria-label="Parallele"><svg><use href="#w10"/></svg></button>
        <button class="ib" aria-label="Parallele durch Punkte"><svg><use href="#w11"/></svg></button><hr>
        <button class="ib" aria-label="Winkel"><svg><use href="#w12"/></svg></button>
        <button class="ib" aria-label="Mittellinie"><svg><use href="#w13"/></svg></button>
        <button class="ib" aria-label="Mittellinie kurz"><svg><use href="#w14"/></svg></button>
      </div>
      <div class="view">
        <svg class="scene" viewBox="562 102 1342 889" preserveAspectRatio="xMidYMid slice" role="img" aria-label="3D-Modell">
          <path d="M1081 102L1115 965 1326 991H1734L1700 122 1537 102z" fill="#e2fefe"/>
          <g class="wire">
            <path d="M562 151L845 102M562 196L976 246M562 356L972 287M966 159L996 913M976 246L1007 991M910 314L937 991M928 316L956 991M715 290L742 991M721 452L916 475M562 724L987 650M562 862H567L681 841 688 991M567 861L573 988M562 987L996 913M588 983L645 990"/>
            <path d="M562 986L996 912L1163 884M610 991L1163 895M1113 889L1163 895M1113 879L1163 885M1201 102L1202 130M1233 903L1235 959 1050 991M1428 991L1681 946 1749 935 1750 946 1681 957 1500 991M1681 957L1733 964M1681 946L1733 953"/>
          </g>
          <path d="M1134 130L1651 192 1681 957 1163 895z" fill="#5f7777"/>
          <path d="M1134 130L1170 124H1180L1691 186 1651 193z" fill="#738b8b"/>
          <path d="M1651 193L1691 186 1721 950 1681 957z" fill="#617a7a"/>
          <path d="M1163 885L1721 951M1600 961L1681 946 1721 939" fill="none" stroke="#b6d2d2"/>
          <path d="M1163 895L1681 957" fill="none" stroke="#c8dcdc" stroke-dasharray="5 3"/>
          <path d="M1134 130L1651 193M1136 191L1653 253M1402 163L1432 927" fill="none" stroke="#22dd30"/>
          <path d="M1134 130L1164 895" fill="none" stroke="#22dd30" stroke-width="2"/>
          <path d="M1081 102L1115 965 1326 991M1537 102L1700 122 1734 991" fill="none" stroke="#1c2424"/>
          <path d="M1407 543V514M1403 519L1407 514 1411 519M1407 544L1386 541M1407 544L1388 547M1384 538H1393L1384 547H1393M1386 538L1392 546M1406 505V507M1386 532V534" fill="none" stroke="#111"/>
          <path d="M1411 151V158M1685 571H1691" stroke="#243c8c"/>
        </svg>
        <div class="vbar"><svg><use href="#sb"/></svg><div class="track"><i class="thumb"></i></div><svg class="d"><use href="#sb"/></svg></div>
        <div class="sbar"><svg><use href="#sb"/></svg><div class="track"><i class="thumb t-view"></i></div><svg class="r"><use href="#sb"/></svg></div>
        <div class="corner"></div>
      </div>
    </div>
  </main>
</div>

<footer class="status"><div class="cell a"></div><div class="cell b"></div>
  <svg class="brand" viewBox="0 0 63 28" role="img" aria-label="Data Solid"><path d="M0 0h63v28H0z" fill="#dcdcdc"/><path d="M3 14C6 4 20 1 34 1c14 0 23 4 23 10-5 5-12 5-17 16-20 1-40-3-37-13z" fill="#dc0a32"/><text x="12" y="14" class="data">Data</text><text x="20" y="24" class="solid">Solid</text></svg>
</footer>

<section class="float">
  <header><h2>Status</h2><button aria-label="Status schließen">·</button></header>
  <div class="body"><div class="left"></div>
    <div class="fields">
      <div><input aria-label="Wert 1"><input aria-label="Wert 2"></div>
      <div><input aria-label="Wert 3"><input aria-label="Wert 4"><input aria-label="Wert 5"></div>
      <div><input aria-label="Wert 6"><input aria-label="Wert 7"><input aria-label="Wert 8"><input aria-label="Wert 9"></div>
      <div><input aria-label="Wert 10"></div>
    </div>
  </div>
</section>
</body>
</html>
```
FILE: styles.css
```css
* { box-sizing: border-box; }
body {
  margin: 0;
  height: 100vh;
  display: flex;
  flex-direction: column;
  background: #efefef;
  border-left: 1px solid #46548c;
  border-bottom: 1px solid #2a3054;
  font: 12px/16px "Open Sans", "Noto Sans", sans-serif;
  color: #111;
  overflow: hidden;
}
.defs { position: absolute; width: 0; height: 0; }
button, input, select { font: inherit; color: inherit; margin: 0; padding: 0; border: 0; background: none; }
h1, h2 { margin: 0; font: inherit; }
ul { margin: 0; padding: 0; list-style: none; }
svg { display: block; flex: none; }

.title { display: flex; flex: none; align-items: center; height: 24px; padding: 0 17px 8px 7px; gap: 7px; background: #fff; color: #9a9a9a; }
.logo { width: 16px; height: 10px; }
.winbtns { display: flex; margin-left: auto; gap: 34px; }
.winbtns svg { width: 12px; height: 12px; fill: none; stroke: #999; }

.menu { display: flex; flex: none; align-items: center; height: 17px; padding: 0 1px 0 7px; background: #fff; color: #777; font-size: 11px; }
.menu > button { padding-right: 15px; }
.menu > .logo { margin-right: 7px; }
.mdi { display: flex; margin-left: auto; gap: 2px; }
.mdi button { width: 17px; height: 17px; background: #e3e5e7; display: grid; place-items: center; }
.mdi svg { width: 12px; height: 12px; fill: none; stroke: #9aa6b2; stroke-width: 2; }
.mdi .thin { stroke-width: 1; }

.bar { display: flex; flex: none; align-items: center; gap: 1px; height: 31px; padding: 0 4px; border-bottom: 1px solid #999; }
.ib { width: 22px; height: 22px; display: grid; place-items: center; flex: none; }
.ib svg { width: 22px; height: 22px; }
.ib.wide { width: 24px; }
.ib.mid { width: 23px; }
.ib.grid, .ib.grid svg { width: 48px; }
.ib.black { background: #000; }
.flip svg { transform: scaleX(-1); }
.dd { width: 8px; height: 22px; flex: none; }
.dd svg { width: 8px; height: 22px; }
.dd.off { fill: #888; }
.pair { display: flex; }
.sep { width: 5px; height: 24px; flex: none; background: linear-gradient(#999, #999) center / 1px 100% no-repeat; }
.sel { position: relative; display: flex; flex: none; height: 24px; }
.sel select { appearance: none; width: 100%; padding: 0 14px 0 3px; background: #e1e1e1; border: 1px solid #adadad; }
.sel.white select { background: #fff; border-color: #7a7a7a; }
.sel svg { position: absolute; right: 4px; top: 7px; width: 10px; height: 10px; pointer-events: none; }
.sel .stroke { left: 6px; top: 10px; width: 48px; height: 4px; }
.field { height: 24px; padding: 0 4px; background: #fff; border: 1px solid #7a7a7a; flex: none; }
.w138 { width: 138px; }
.w116 { width: 116px; font-size: 11px; }
.w111 { width: 111px; font-size: 11px; }
.w110 { width: 110px; }
.w90 { width: 90px; margin-left: 6px; }
.w82 { width: 82px; font-size: 11px; }
.w78 { width: 78px; }
.w58 { width: 58px; font-size: 11px; }
.disc { position: relative; }
.disc b { position: absolute; inset: 3px 0; text-align: center; font: bold 13px/16px "Liberation Sans", Arial, sans-serif; color: #103008; }
.star { width: 12px; height: 12px; margin-right: 2px; }
.spin { display: flex; flex: none; }
.spin .field { width: 30px; font-weight: 700; padding: 0 3px; }
.spin span { display: flex; flex-direction: column; gap: 2px; justify-content: center; }
.spin button { width: 16px; height: 10px; border: 1px solid #aaa; display: grid; place-items: center; }
.spin svg { width: 6px; height: 4px; }

.work { flex: 1; display: flex; min-height: 0; }
.dock { width: 502px; flex: none; display: flex; flex-direction: column; padding: 0 5px 6px 6px; border-right: 1px solid #777; }
.grip { display: flex; flex: none; align-items: center; height: 20px; gap: 4px; }
.grip i { flex: 1; height: 5px; border: solid #a0a0a0; border-width: 1px 1px 1px 0; background: #fff; margin-right: 4px; }
.grip svg { width: 8px; height: 8px; }
.grip button { width: 8px; }
.dockbar { display: flex; flex: none; gap: 2px; height: 27px; padding: 1px 2px; border-bottom: 1px solid #a0a0a0; }
.book { flex: 1; margin-top: 1px; display: flex; flex-direction: column; min-height: 0; border: 2px solid #777; padding: 0 3px 3px 2px; background: #f8f8f8; font-size: 11px; }
.tabs { display: flex; flex: none; align-items: flex-end; height: 22px; margin: 0 -3px 0 -2px; background: #efefef; }
.tabs button { display: flex; align-items: center; gap: 6px; height: 20px; padding: 0 4px 0 6px; border-right: 1px solid #ddd; }
.tabs .on { height: 22px; padding: 0 7px 2px 8px; background: #fff; }
.tabs svg { width: 14px; height: 14px; }
.panes { flex: 1; display: flex; gap: 6px; min-height: 0; }
.pane { background: #fff; border: 1px solid #777; display: flex; flex-direction: column; min-width: 0; }
.tree { width: 323px; flex: none; }
.tree ul { flex: 1; overflow: hidden; white-space: nowrap; }
.tree li { display: flex; align-items: center; height: 18px; }
.tree svg { width: 16px; height: 16px; }
.tree .path { padding-left: 4px; }
.tree .l1 { padding-left: 2px; }
.tree .l2 { padding-left: 21px; }
.tree .l3 { padding-left: 24px; }
.tree .l1 svg, .tree .l2 svg { margin-right: 5px; }
.tree .l3 svg + svg { margin-right: 5px; }
.green { color: #12b024; }
.dark { color: #b01018; }
.red { color: #e8102a; }
.cur { background: #d8d8d8; }
.objs { flex: 1; overflow: hidden; white-space: nowrap; }
.objs h2 { padding: 4px 6px; }
.objs li { display: flex; align-items: center; gap: 1px; height: 19px; padding-left: 24px; }
.objs li svg { width: 16px; height: 16px; }
.sbar { display: flex; flex: none; align-items: center; height: 16px; padding: 0 4px; background: #efefef; }
.sbar svg, .vbar svg { width: 10px; height: 10px; }
.r { transform: scaleX(-1); }
.track { flex: 1; height: 16px; position: relative; }
.thumb { position: absolute; top: 0; bottom: 0; background: #cdcdcd; }
.t-tree { left: 9%; width: 45%; }
.t-log { left: 0; width: 23%; }
.t-view { left: 45.5%; width: 23.4%; }
.delbar { display: flex; flex: none; gap: 3px; height: 29px; margin: 6px 0 1px; padding: 2px; border-bottom: 1px solid #999; background: #efefef; }
.delbar svg { width: 24px; height: 24px; }
.log { height: 183px; flex: none; }
.gutter { flex: 1; width: 16px; background: #efefef; }

.main { flex: 1; display: flex; flex-direction: column; min-width: 0; }
.bar2 { height: 30px; }
.stage { flex: 1; display: flex; min-height: 0; }
.tools { display: flex; flex: none; flex-direction: column; align-items: center; padding-top: 2px; border-right: 1px solid #999; }
.tools .ib { height: 24px; width: 24px; }
.tools hr { width: 22px; height: 1px; margin: 1px 0 2px; border: 0; background: #888; }
.one { width: 29px; }
.two { width: 30px; }
.ln { fill: none; stroke: #1fb53c; stroke-width: 1.300; }
.rd { fill: none; stroke: #e03030; stroke-width: 1.300; }
.pt { stroke: #e01818; stroke-width: 3; stroke-linecap: round; }
.view { flex: 1; display: grid; grid-template: minmax(0, 1fr) 16px / minmax(0, 1fr) 16px; min-width: 0; }
.scene { width: 100%; height: 100%; background: #fff; shape-rendering: crispEdges; }
.wire { fill: none; stroke: #c2c6c6; }
.vbar { display: flex; flex-direction: column; align-items: center; padding: 4px 0; background: #efefef; }
.vbar svg { transform: rotate(90deg); }
.vbar .d { transform: rotate(-90deg); }
.vbar .track { width: 16px; }
.vbar .thumb { left: 0; right: 1px; top: 24%; bottom: auto; height: 23%; }

.status { display: flex; flex: none; gap: 3px; align-items: flex-end; height: 32px; border-top: 1px solid #999; padding-bottom: 1px; }
.cell { height: 20px; margin-bottom: 5px; border: solid #a0a0a0; border-width: 1px 0 0 1px; box-shadow: 1px 1px #fff; }
.a { width: 197px; }
.b { width: 1348px; flex-shrink: 1; }
.brand { width: 63px; height: 28px; margin-left: auto; }
.data { font: bold 12px "DejaVu Sans", sans-serif; fill: #fff; }
.solid { font: italic bold 12px "DejaVu Sans", sans-serif; fill: #000; }

.float { position: absolute; left: 235px; top: 403px; width: 189px; background: #efefef; box-shadow: 0 2px 10px rgba(0, 0, 0, .4); }
.float header { display: flex; align-items: center; justify-content: space-between; height: 30px; padding: 0 1px 0 8px; background: #fff; color: #999; }
.float header button { width: 19px; height: 19px; background: #e1e1e1; color: #fff; }
.float .body { display: flex; height: 226px; }
.left { width: 97px; border-right: 2px solid #777; }
.fields { flex: 1; display: flex; flex-direction: column; gap: 1px; padding-left: 9px; }
.fields div { display: flex; flex-direction: column; }
.fields input { height: 20px; width: 100%; background: #fff; border: 1px solid #6c6c6c; }
```
